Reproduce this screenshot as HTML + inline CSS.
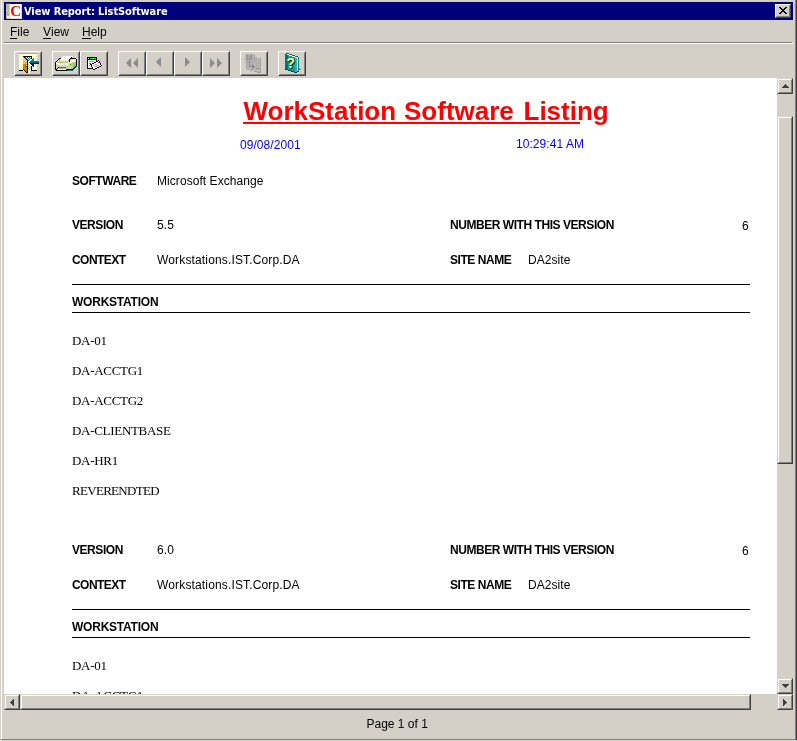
<!DOCTYPE html>
<html>
<head>
<meta charset="utf-8">
<title>View Report: ListSoftware</title>
<style>
html,body{margin:0;padding:0;}
body{width:797px;height:741px;overflow:hidden;background:#d4d0c8;position:relative;font-family:"Liberation Sans",sans-serif;font-size:12px;color:#000;}
#w{position:absolute;left:0;top:0;width:797px;height:741px;background:#d4d0c8;will-change:transform;overflow:hidden;}
.a{position:absolute;}
.t{position:absolute;white-space:nowrap;line-height:16px;height:16px;}
/* window frame */
#fl{left:1px;top:0;width:1px;height:739px;background:#fff;}
#fr1{left:795px;top:0;width:1px;height:740px;background:#808080;}
#fr2{left:796px;top:0;width:1px;height:740px;background:#404040;}
#fb1{left:1px;top:739px;width:794px;height:1px;background:#808080;}
#fb2{left:0;top:740px;width:797px;height:1px;background:#d4d0c8;}
/* title bar */
#tb{left:4px;top:2px;width:789px;height:18px;background:#00007b;}
#ttl{left:24px;top:4px;color:#fff;font-family:'DejaVu Sans Condensed','DejaVu Sans',sans-serif;font-weight:bold;font-size:11px;line-height:16px;letter-spacing:-0.1px;}
#cls{left:775px;top:4px;width:16px;height:14px;background:#d4d0c8;box-sizing:border-box;border:1px solid;border-color:#fff #404040 #404040 #fff;}
#cls i{position:absolute;left:0;top:0;right:0;bottom:0;border:1px solid;border-color:#d4d0c8 #808080 #808080 #d4d0c8;}
/* menu */
.m{top:24px;font-size:12px;}
.m u{text-decoration:none;border-bottom:1px solid #000;padding-bottom:0px;display:inline-block;line-height:12px;}
#ms1{left:4px;top:42px;width:788px;height:1px;background:#808080;}
#ms2{left:4px;top:43px;width:789px;height:1px;background:#fff;}
/* toolbar buttons */
.b{position:absolute;top:51px;width:28px;height:25px;box-sizing:border-box;background:#d4d0c8;border:1px solid;border-color:#fff #404040 #404040 #fff;}
.b:after{content:"";position:absolute;left:0;top:0;right:0;bottom:0;border:1px solid;border-color:#d4d0c8 #808080 #808080 #d4d0c8;}
.b svg{position:absolute;left:-1px;top:-1px;width:28px;height:25px;}
/* page */
#pg{left:4px;top:78px;width:773px;height:616px;background:#fff;overflow:hidden;}
/* scrollbars */
.sb{position:absolute;box-sizing:border-box;background:#d4d0c8;border:1px solid;border-color:#d4d0c8 #404040 #404040 #d4d0c8;}
.sb:after{content:"";position:absolute;left:0;top:0;right:0;bottom:0;border:1px solid;border-color:#fff #808080 #808080 #fff;}
.sb svg{position:absolute;left:-1px;top:-1px;width:16px;height:16px;}
/* report text (coords relative to #pg : page x = X-4, y = Y-78) */
.lb{font-weight:bold;font-size:12px;letter-spacing:-0.45px;}
.v{font-size:12px;letter-spacing:0.06px;}
.ws{font-family:"Liberation Serif",serif;font-size:13px;letter-spacing:-0.3px;}
.hl{position:absolute;left:68px;width:678px;height:1px;background:#000;}
.h1{top:18px;font-size:26px;line-height:30px;height:30px;font-weight:bold;color:#f00;}
#h1u{left:239px;top:44px;width:337px;height:2px;background:#f00;}
.bl{color:#00f;}
</style>
</head>
<body>
<div id="w">
<div class="a" id="fl"></div><div class="a" id="fr1"></div><div class="a" id="fr2"></div><div class="a" id="fb1"></div><div class="a" id="fb2"></div>

<div class="a" id="tb"></div>
<svg class="a" style="left:6px;top:3px" width="16" height="16" viewBox="0 0 16 16" shape-rendering="crispEdges">
<rect x="0" y="0" width="16" height="16" fill="#fbfbf8"/>
<rect x="0" y="1" width="3" height="15" fill="#bdb68a"/><rect x="3" y="1" width="1" height="15" fill="#d9d4b8"/><rect x="15" y="1" width="1" height="15" fill="#d8d8d4"/><rect x="4" y="15" width="12" height="1" fill="#e4e4dc"/>
<rect x="0" y="0" width="4" height="1" fill="#f00"/>
<rect x="4" y="0" width="12" height="1" fill="#000"/>
<rect x="1" y="13" width="2" height="2" fill="#fff"/>
<rect x="0" y="7" width="1" height="1" fill="#fff"/>
<text x="4.2" y="13.2" font-family="Liberation Serif, serif" font-weight="bold" font-size="15" fill="#f00" shape-rendering="auto">C</text>
</svg>
<div class="t" id="ttl">View Report: ListSoftware</div>
<div class="a" id="cls"><i></i>
<svg class="a" style="left:-1px;top:-1px" width="16" height="14" viewBox="0 0 16 14" shape-rendering="crispEdges" fill="#000"><rect x="4" y="3" width="2" height="1"/><rect x="10" y="3" width="2" height="1"/><rect x="5" y="4" width="2" height="1"/><rect x="9" y="4" width="2" height="1"/><rect x="6" y="5" width="4" height="1"/><rect x="7" y="6" width="2" height="1"/><rect x="6" y="7" width="4" height="1"/><rect x="5" y="8" width="2" height="1"/><rect x="9" y="8" width="2" height="1"/><rect x="4" y="9" width="2" height="1"/><rect x="10" y="9" width="2" height="1"/></svg>
</div>

<div class="t m" style="left:10px"><u>F</u>ile</div>
<div class="t m" style="left:43px"><u>V</u>iew</div>
<div class="t m" style="left:82px"><u>H</u>elp</div>
<div class="a" id="ms1"></div><div class="a" id="ms2"></div>

<!-- toolbar -->
<div class="b" style="left:14px" id="b1"><svg viewBox="0 0 28 25" shape-rendering="crispEdges"><rect x="5" y="2" width="18" height="1" fill="#b5b573"/><rect x="5" y="3" width="18" height="1" fill="#ffffce"/><rect x="5" y="4" width="18" height="1" fill="#ffffce"/><rect x="5" y="5" width="4" height="1" fill="#ffffce"/><rect x="9" y="5" width="9" height="1" fill="#000"/><rect x="18" y="5" width="5" height="1" fill="#ffffce"/><rect x="5" y="6" width="4" height="1" fill="#ffffce"/><rect x="9" y="6" width="1" height="1" fill="#f7c694"/><rect x="10" y="6" width="1" height="1" fill="#000"/><rect x="11" y="6" width="1" height="1" fill="#008284"/><rect x="12" y="6" width="1" height="1" fill="#fff"/><rect x="13" y="6" width="1" height="1" fill="#008284"/><rect x="14" y="6" width="1" height="1" fill="#fff"/><rect x="15" y="6" width="1" height="1" fill="#008284"/><rect x="16" y="6" width="1" height="1" fill="#fff"/><rect x="17" y="6" width="1" height="1" fill="#000"/><rect x="18" y="6" width="1" height="1" fill="#ffffce"/><rect x="19" y="6" width="2" height="1" fill="#fff"/><rect x="21" y="6" width="2" height="1" fill="#ffffce"/><rect x="5" y="7" width="4" height="1" fill="#ffffce"/><rect x="9" y="7" width="2" height="1" fill="#f7c694"/><rect x="11" y="7" width="1" height="1" fill="#000"/><rect x="12" y="7" width="1" height="1" fill="#008284"/><rect x="13" y="7" width="1" height="1" fill="#fff"/><rect x="14" y="7" width="1" height="1" fill="#008284"/><rect x="15" y="7" width="1" height="1" fill="#fff"/><rect x="16" y="7" width="1" height="1" fill="#008284"/><rect x="17" y="7" width="1" height="1" fill="#000"/><rect x="18" y="7" width="1" height="1" fill="#fff"/><rect x="19" y="7" width="1" height="1" fill="#008284"/><rect x="20" y="7" width="1" height="1" fill="#fff"/><rect x="21" y="7" width="2" height="1" fill="#ffffce"/><rect x="5" y="8" width="4" height="1" fill="#ffffce"/><rect x="9" y="8" width="3" height="1" fill="#f7c694"/><rect x="12" y="8" width="1" height="1" fill="#000"/><rect x="13" y="8" width="1" height="1" fill="#008284"/><rect x="14" y="8" width="1" height="1" fill="#fff"/><rect x="15" y="8" width="1" height="1" fill="#008284"/><rect x="16" y="8" width="2" height="1" fill="#fff"/><rect x="18" y="8" width="2" height="1" fill="#008284"/><rect x="20" y="8" width="1" height="1" fill="#fff"/><rect x="21" y="8" width="2" height="1" fill="#ffffce"/><rect x="5" y="9" width="4" height="1" fill="#ffffce"/><rect x="9" y="9" width="4" height="1" fill="#f7c694"/><rect x="13" y="9" width="1" height="1" fill="#000"/><rect x="14" y="9" width="1" height="1" fill="#008284"/><rect x="15" y="9" width="2" height="1" fill="#fff"/><rect x="17" y="9" width="3" height="1" fill="#008284"/><rect x="20" y="9" width="3" height="1" fill="#fff"/><rect x="5" y="10" width="4" height="1" fill="#ffffce"/><rect x="9" y="10" width="4" height="1" fill="#efb27b"/><rect x="13" y="10" width="1" height="1" fill="#000"/><rect x="14" y="10" width="2" height="1" fill="#fff"/><rect x="16" y="10" width="9" height="1" fill="#008284"/><rect x="5" y="11" width="4" height="1" fill="#ffffce"/><rect x="9" y="11" width="4" height="1" fill="#efb27b"/><rect x="13" y="11" width="1" height="1" fill="#000"/><rect x="14" y="11" width="1" height="1" fill="#fff"/><rect x="15" y="11" width="10" height="1" fill="#00636b"/><rect x="5" y="12" width="4" height="1" fill="#ffffce"/><rect x="9" y="12" width="4" height="1" fill="#efb27b"/><rect x="13" y="12" width="1" height="1" fill="#000"/><rect x="14" y="12" width="2" height="1" fill="#fff"/><rect x="16" y="12" width="9" height="1" fill="#000084"/><rect x="5" y="13" width="4" height="1" fill="#ffffce"/><rect x="9" y="13" width="4" height="1" fill="#c6840c"/><rect x="13" y="13" width="1" height="1" fill="#000"/><rect x="14" y="13" width="1" height="1" fill="#c6c6c6"/><rect x="15" y="13" width="2" height="1" fill="#fff"/><rect x="17" y="13" width="3" height="1" fill="#000084"/><rect x="20" y="13" width="3" height="1" fill="#fff"/><rect x="5" y="14" width="4" height="1" fill="#ffffce"/><rect x="9" y="14" width="3" height="1" fill="#c6840c"/><rect x="12" y="14" width="1" height="1" fill="#fff"/><rect x="13" y="14" width="1" height="1" fill="#000"/><rect x="14" y="14" width="1" height="1" fill="#fff"/><rect x="15" y="14" width="1" height="1" fill="#c6c6c6"/><rect x="16" y="14" width="2" height="1" fill="#fff"/><rect x="18" y="14" width="2" height="1" fill="#000084"/><rect x="20" y="14" width="1" height="1" fill="#fff"/><rect x="21" y="14" width="2" height="1" fill="#ffffce"/><rect x="5" y="15" width="4" height="1" fill="#ffffce"/><rect x="9" y="15" width="3" height="1" fill="#c6840c"/><rect x="12" y="15" width="2" height="1" fill="#000"/><rect x="14" y="15" width="1" height="1" fill="#c6c6c6"/><rect x="15" y="15" width="1" height="1" fill="#fff"/><rect x="16" y="15" width="1" height="1" fill="#c6c6c6"/><rect x="17" y="15" width="1" height="1" fill="#000"/><rect x="18" y="15" width="1" height="1" fill="#fff"/><rect x="19" y="15" width="1" height="1" fill="#000084"/><rect x="20" y="15" width="1" height="1" fill="#fff"/><rect x="21" y="15" width="2" height="1" fill="#ffffce"/><rect x="5" y="16" width="4" height="1" fill="#ffffce"/><rect x="9" y="16" width="4" height="1" fill="#c6840c"/><rect x="13" y="16" width="1" height="1" fill="#000"/><rect x="14" y="16" width="1" height="1" fill="#fff"/><rect x="15" y="16" width="1" height="1" fill="#c6c6c6"/><rect x="16" y="16" width="1" height="1" fill="#fff"/><rect x="17" y="16" width="1" height="1" fill="#000"/><rect x="18" y="16" width="1" height="1" fill="#ffffce"/><rect x="19" y="16" width="2" height="1" fill="#fff"/><rect x="21" y="16" width="2" height="1" fill="#ffffce"/><rect x="5" y="17" width="4" height="1" fill="#ffffce"/><rect x="9" y="17" width="4" height="1" fill="#c6840c"/><rect x="13" y="17" width="1" height="1" fill="#000"/><rect x="14" y="17" width="1" height="1" fill="#c6c6c6"/><rect x="15" y="17" width="1" height="1" fill="#fff"/><rect x="16" y="17" width="1" height="1" fill="#c6c6c6"/><rect x="17" y="17" width="1" height="1" fill="#000"/><rect x="18" y="17" width="5" height="1" fill="#ffffce"/><rect x="5" y="18" width="4" height="1" fill="#ffffce"/><rect x="9" y="18" width="1" height="1" fill="#000"/><rect x="10" y="18" width="3" height="1" fill="#c6840c"/><rect x="13" y="18" width="1" height="1" fill="#000"/><rect x="14" y="18" width="1" height="1" fill="#fff"/><rect x="15" y="18" width="1" height="1" fill="#c6c6c6"/><rect x="16" y="18" width="1" height="1" fill="#fff"/><rect x="17" y="18" width="1" height="1" fill="#000"/><rect x="18" y="18" width="5" height="1" fill="#ffffce"/><rect x="5" y="19" width="4" height="1" fill="#000"/><rect x="9" y="19" width="1" height="1" fill="#ffffce"/><rect x="10" y="19" width="1" height="1" fill="#000"/><rect x="11" y="19" width="2" height="1" fill="#c6840c"/><rect x="13" y="19" width="1" height="1" fill="#000"/><rect x="14" y="19" width="2" height="1" fill="#fff"/><rect x="16" y="19" width="1" height="1" fill="#ffffce"/><rect x="17" y="19" width="6" height="1" fill="#000"/><rect x="11" y="20" width="1" height="1" fill="#000"/><rect x="12" y="20" width="1" height="1" fill="#c6840c"/><rect x="13" y="20" width="1" height="1" fill="#000"/><rect x="14" y="20" width="2" height="1" fill="#fff"/><rect x="12" y="21" width="2" height="1" fill="#000"/><rect x="14" y="21" width="2" height="1" fill="#fff"/></svg></div>
<div class="b" style="left:52px" id="b2"><svg viewBox="0 0 28 25" shape-rendering="crispEdges"><rect x="11" y="5" width="10" height="1" fill="#fff"/><rect x="10" y="6" width="9" height="1" fill="#fff"/><rect x="19" y="6" width="1" height="1" fill="#000"/><rect x="7" y="7" width="2" height="1" fill="#000"/><rect x="9" y="7" width="9" height="1" fill="#fff"/><rect x="18" y="7" width="6" height="1" fill="#000"/><rect x="6" y="8" width="1" height="1" fill="#000"/><rect x="7" y="8" width="1" height="1" fill="#9c9c9c"/><rect x="8" y="8" width="9" height="1" fill="#fff"/><rect x="17" y="8" width="1" height="1" fill="#000"/><rect x="18" y="8" width="1" height="1" fill="#9c9c9c"/><rect x="19" y="8" width="5" height="1" fill="#efefc6"/><rect x="24" y="8" width="1" height="1" fill="#000"/><rect x="5" y="9" width="1" height="1" fill="#000"/><rect x="6" y="9" width="1" height="1" fill="#efefc6"/><rect x="7" y="9" width="1" height="1" fill="#9c9c9c"/><rect x="8" y="9" width="8" height="1" fill="#efefc6"/><rect x="17" y="9" width="1" height="1" fill="#000"/><rect x="18" y="9" width="3" height="1" fill="#efefc6"/><rect x="21" y="9" width="3" height="1" fill="#fff"/><rect x="24" y="9" width="1" height="1" fill="#000"/><rect x="4" y="10" width="1" height="1" fill="#000"/><rect x="5" y="10" width="12" height="1" fill="#d6d6a5"/><rect x="17" y="10" width="1" height="1" fill="#000"/><rect x="18" y="10" width="2" height="1" fill="#efefc6"/><rect x="20" y="10" width="3" height="1" fill="#fff"/><rect x="23" y="10" width="1" height="1" fill="#c6c68c"/><rect x="24" y="10" width="1" height="1" fill="#000"/><rect x="3" y="11" width="1" height="1" fill="#000"/><rect x="4" y="11" width="1" height="1" fill="#fff"/><rect x="5" y="11" width="12" height="1" fill="#c6c68c"/><rect x="17" y="11" width="3" height="1" fill="#fff"/><rect x="20" y="11" width="4" height="1" fill="#c6c68c"/><rect x="24" y="11" width="1" height="1" fill="#000"/><rect x="3" y="12" width="1" height="1" fill="#000"/><rect x="4" y="12" width="2" height="1" fill="#fff"/><rect x="6" y="12" width="11" height="1" fill="#efefc6"/><rect x="17" y="12" width="2" height="1" fill="#d6d6a5"/><rect x="19" y="12" width="2" height="1" fill="#c6c68c"/><rect x="21" y="12" width="3" height="1" fill="#b5b57b"/><rect x="24" y="12" width="1" height="1" fill="#000"/><rect x="3" y="13" width="1" height="1" fill="#000"/><rect x="4" y="13" width="2" height="1" fill="#d6d6a5"/><rect x="6" y="13" width="10" height="1" fill="#fff"/><rect x="16" y="13" width="2" height="1" fill="#d6d6a5"/><rect x="18" y="13" width="1" height="1" fill="#00b500"/><rect x="19" y="13" width="2" height="1" fill="#c6c68c"/><rect x="21" y="13" width="3" height="1" fill="#b5b57b"/><rect x="24" y="13" width="1" height="1" fill="#000"/><rect x="3" y="14" width="1" height="1" fill="#000"/><rect x="4" y="14" width="15" height="1" fill="#d6d6a5"/><rect x="19" y="14" width="2" height="1" fill="#c6c68c"/><rect x="21" y="14" width="3" height="1" fill="#b5b57b"/><rect x="24" y="14" width="1" height="1" fill="#000"/><rect x="3" y="15" width="1" height="1" fill="#000"/><rect x="4" y="15" width="15" height="1" fill="#d6d6a5"/><rect x="19" y="15" width="2" height="1" fill="#c6c68c"/><rect x="21" y="15" width="2" height="1" fill="#b5b57b"/><rect x="23" y="15" width="1" height="1" fill="#000"/><rect x="24" y="15" width="1" height="1" fill="#008284"/><rect x="3" y="16" width="1" height="1" fill="#000"/><rect x="4" y="16" width="2" height="1" fill="#d6d6a5"/><rect x="6" y="16" width="1" height="1" fill="#000"/><rect x="7" y="16" width="7" height="1" fill="#636363"/><rect x="14" y="16" width="5" height="1" fill="#d6d6a5"/><rect x="19" y="16" width="2" height="1" fill="#c6c68c"/><rect x="21" y="16" width="1" height="1" fill="#b5b57b"/><rect x="22" y="16" width="1" height="1" fill="#000"/><rect x="23" y="16" width="1" height="1" fill="#008284"/><rect x="3" y="17" width="1" height="1" fill="#000"/><rect x="4" y="17" width="1" height="1" fill="#d6d6a5"/><rect x="5" y="17" width="1" height="1" fill="#000"/><rect x="6" y="17" width="9" height="1" fill="#bdbdad"/><rect x="15" y="17" width="4" height="1" fill="#d6d6a5"/><rect x="19" y="17" width="2" height="1" fill="#c6c68c"/><rect x="21" y="17" width="1" height="1" fill="#000"/><rect x="22" y="17" width="1" height="1" fill="#008284"/><rect x="3" y="18" width="2" height="1" fill="#000"/><rect x="5" y="18" width="1" height="1" fill="#d6d6a5"/><rect x="6" y="18" width="8" height="1" fill="#fff"/><rect x="14" y="18" width="1" height="1" fill="#004a4a"/><rect x="15" y="18" width="6" height="1" fill="#000"/><rect x="21" y="18" width="1" height="1" fill="#008284"/><rect x="4" y="19" width="11" height="1" fill="#000"/><rect x="15" y="19" width="6" height="1" fill="#008284"/></svg></div>
<div class="b" style="left:80px" id="b3"><svg viewBox="0 0 28 25" shape-rendering="crispEdges"><rect x="7" y="6" width="10" height="1" fill="#000"/><rect x="7" y="7" width="1" height="1" fill="#000"/><rect x="8" y="7" width="1" height="1" fill="#fff"/><rect x="9" y="7" width="1" height="1" fill="#000"/><rect x="10" y="7" width="6" height="1" fill="#00ff00"/><rect x="16" y="7" width="1" height="1" fill="#000"/><rect x="7" y="8" width="10" height="1" fill="#000"/><rect x="7" y="9" width="1" height="1" fill="#000"/><rect x="8" y="9" width="8" height="1" fill="#fff"/><rect x="16" y="9" width="1" height="1" fill="#000"/><rect x="18" y="9" width="1" height="1" fill="#000"/><rect x="7" y="10" width="1" height="1" fill="#000"/><rect x="8" y="10" width="1" height="1" fill="#fff"/><rect x="9" y="10" width="5" height="1" fill="#9c9c9c"/><rect x="14" y="10" width="2" height="1" fill="#fff"/><rect x="16" y="10" width="2" height="1" fill="#000"/><rect x="18" y="10" width="1" height="1" fill="#fff"/><rect x="19" y="10" width="1" height="1" fill="#000"/><rect x="7" y="11" width="1" height="1" fill="#000"/><rect x="8" y="11" width="6" height="1" fill="#fff"/><rect x="14" y="11" width="2" height="1" fill="#000"/><rect x="16" y="11" width="2" height="1" fill="#fff"/><rect x="18" y="11" width="1" height="1" fill="#ff00ff"/><rect x="19" y="11" width="1" height="1" fill="#000"/><rect x="7" y="12" width="1" height="1" fill="#000"/><rect x="8" y="12" width="1" height="1" fill="#fff"/><rect x="9" y="12" width="1" height="1" fill="#9c9c9c"/><rect x="10" y="12" width="1" height="1" fill="#404040"/><rect x="11" y="12" width="1" height="1" fill="#fff"/><rect x="12" y="12" width="2" height="1" fill="#000"/><rect x="14" y="12" width="6" height="1" fill="#fff"/><rect x="20" y="12" width="1" height="1" fill="#000"/><rect x="7" y="13" width="1" height="1" fill="#000"/><rect x="8" y="13" width="2" height="1" fill="#fff"/><rect x="10" y="13" width="2" height="1" fill="#000"/><rect x="12" y="13" width="3" height="1" fill="#fff"/><rect x="15" y="13" width="2" height="1" fill="#9c9c9c"/><rect x="17" y="13" width="3" height="1" fill="#fff"/><rect x="20" y="13" width="1" height="1" fill="#000"/><rect x="7" y="14" width="1" height="1" fill="#000"/><rect x="8" y="14" width="1" height="1" fill="#fff"/><rect x="9" y="14" width="1" height="1" fill="#9c9c9c"/><rect x="10" y="14" width="1" height="1" fill="#fff"/><rect x="11" y="14" width="1" height="1" fill="#000"/><rect x="12" y="14" width="1" height="1" fill="#fff"/><rect x="13" y="14" width="2" height="1" fill="#9c9c9c"/><rect x="15" y="14" width="2" height="1" fill="#fff"/><rect x="17" y="14" width="2" height="1" fill="#9c9c9c"/><rect x="19" y="14" width="2" height="1" fill="#fff"/><rect x="21" y="14" width="1" height="1" fill="#000"/><rect x="7" y="15" width="1" height="1" fill="#000"/><rect x="8" y="15" width="3" height="1" fill="#fff"/><rect x="11" y="15" width="1" height="1" fill="#000"/><rect x="12" y="15" width="3" height="1" fill="#fff"/><rect x="15" y="15" width="2" height="1" fill="#9c9c9c"/><rect x="17" y="15" width="2" height="1" fill="#fff"/><rect x="19" y="15" width="2" height="1" fill="#000"/><rect x="7" y="16" width="1" height="1" fill="#000"/><rect x="8" y="16" width="4" height="1" fill="#fff"/><rect x="12" y="16" width="1" height="1" fill="#000"/><rect x="13" y="16" width="4" height="1" fill="#fff"/><rect x="17" y="16" width="2" height="1" fill="#000"/><rect x="7" y="17" width="6" height="1" fill="#000"/><rect x="13" y="17" width="2" height="1" fill="#fff"/><rect x="15" y="17" width="2" height="1" fill="#000"/><rect x="13" y="18" width="2" height="1" fill="#000"/></svg></div>
<div class="b" style="left:118px" id="b4"><svg viewBox="0 0 28 25"><path d="M8 12l5-5v10zM15 12l5-5v10z" fill="#8c8c8c"/></svg></div>
<div class="b" style="left:146px" id="b5"><svg viewBox="0 0 28 25"><path d="M10 11l5-5v10z" fill="#8c8c8c"/></svg></div>
<div class="b" style="left:174px" id="b6"><svg viewBox="0 0 28 25"><path d="M16 11l-5-5v10z" fill="#8c8c8c"/></svg></div>
<div class="b" style="left:202px" id="b7"><svg viewBox="0 0 28 25"><path d="M13 12l-5-5v10zM20 12l-5-5v10z" fill="#8c8c8c"/></svg></div>
<div class="b" style="left:240px" id="b8"><svg viewBox="0 0 28 25" shape-rendering="crispEdges"><rect x="5" y="3" width="9" height="1" fill="#b4b4b4"/><rect x="5" y="4" width="9" height="1" fill="#b4b4b4"/><rect x="14" y="4" width="1" height="1" fill="#a2a2a2"/><rect x="5" y="5" width="9" height="1" fill="#b4b4b4"/><rect x="14" y="5" width="1" height="1" fill="#a2a2a2"/><rect x="5" y="6" width="9" height="1" fill="#b4b4b4"/><rect x="14" y="6" width="1" height="1" fill="#a2a2a2"/><rect x="15" y="6" width="2" height="1" fill="#b4b4b4"/><rect x="5" y="7" width="9" height="1" fill="#b4b4b4"/><rect x="14" y="7" width="1" height="1" fill="#a2a2a2"/><rect x="15" y="7" width="5" height="1" fill="#b4b4b4"/><rect x="20" y="7" width="1" height="1" fill="#a2a2a2"/><rect x="5" y="8" width="9" height="1" fill="#b4b4b4"/><rect x="14" y="8" width="1" height="1" fill="#a2a2a2"/><rect x="15" y="8" width="5" height="1" fill="#b4b4b4"/><rect x="20" y="8" width="1" height="1" fill="#a2a2a2"/><rect x="5" y="9" width="9" height="1" fill="#b4b4b4"/><rect x="14" y="9" width="1" height="1" fill="#a2a2a2"/><rect x="15" y="9" width="5" height="1" fill="#b4b4b4"/><rect x="20" y="9" width="1" height="1" fill="#a2a2a2"/><rect x="6" y="10" width="9" height="1" fill="#a2a2a2"/><rect x="15" y="10" width="5" height="1" fill="#b4b4b4"/><rect x="20" y="10" width="1" height="1" fill="#a2a2a2"/><rect x="6" y="11" width="1" height="1" fill="#a2a2a2"/><rect x="7" y="11" width="2" height="1" fill="#b4b4b4"/><rect x="9" y="11" width="1" height="1" fill="#8c8c8c"/><rect x="10" y="11" width="6" height="1" fill="#b4b4b4"/><rect x="16" y="11" width="3" height="1" fill="#aaaaaa"/><rect x="19" y="11" width="1" height="1" fill="#b4b4b4"/><rect x="20" y="11" width="1" height="1" fill="#a2a2a2"/><rect x="6" y="12" width="1" height="1" fill="#a2a2a2"/><rect x="7" y="12" width="2" height="1" fill="#b4b4b4"/><rect x="9" y="12" width="1" height="1" fill="#8c8c8c"/><rect x="10" y="12" width="10" height="1" fill="#b4b4b4"/><rect x="20" y="12" width="1" height="1" fill="#a2a2a2"/><rect x="6" y="13" width="1" height="1" fill="#a2a2a2"/><rect x="7" y="13" width="2" height="1" fill="#b4b4b4"/><rect x="9" y="13" width="1" height="1" fill="#8c8c8c"/><rect x="10" y="13" width="2" height="1" fill="#b4b4b4"/><rect x="12" y="13" width="1" height="1" fill="#8c8c8c"/><rect x="13" y="13" width="7" height="1" fill="#b4b4b4"/><rect x="20" y="13" width="1" height="1" fill="#a2a2a2"/><rect x="6" y="14" width="1" height="1" fill="#a2a2a2"/><rect x="7" y="14" width="2" height="1" fill="#b4b4b4"/><rect x="9" y="14" width="1" height="1" fill="#8c8c8c"/><rect x="10" y="14" width="2" height="1" fill="#b4b4b4"/><rect x="12" y="14" width="2" height="1" fill="#8c8c8c"/><rect x="14" y="14" width="2" height="1" fill="#b4b4b4"/><rect x="16" y="14" width="3" height="1" fill="#aaaaaa"/><rect x="19" y="14" width="1" height="1" fill="#b4b4b4"/><rect x="20" y="14" width="1" height="1" fill="#a2a2a2"/><rect x="6" y="15" width="1" height="1" fill="#a2a2a2"/><rect x="7" y="15" width="2" height="1" fill="#b4b4b4"/><rect x="9" y="15" width="6" height="1" fill="#8c8c8c"/><rect x="15" y="15" width="5" height="1" fill="#b4b4b4"/><rect x="20" y="15" width="1" height="1" fill="#a2a2a2"/><rect x="6" y="16" width="1" height="1" fill="#a2a2a2"/><rect x="7" y="16" width="5" height="1" fill="#b4b4b4"/><rect x="12" y="16" width="2" height="1" fill="#8c8c8c"/><rect x="14" y="16" width="6" height="1" fill="#b4b4b4"/><rect x="20" y="16" width="1" height="1" fill="#a2a2a2"/><rect x="6" y="17" width="1" height="1" fill="#a2a2a2"/><rect x="7" y="17" width="5" height="1" fill="#b4b4b4"/><rect x="12" y="17" width="1" height="1" fill="#8c8c8c"/><rect x="13" y="17" width="3" height="1" fill="#b4b4b4"/><rect x="16" y="17" width="3" height="1" fill="#8c8c8c"/><rect x="19" y="17" width="1" height="1" fill="#b4b4b4"/><rect x="20" y="17" width="1" height="1" fill="#a2a2a2"/><rect x="7" y="18" width="2" height="1" fill="#a2a2a2"/><rect x="10" y="18" width="10" height="1" fill="#b4b4b4"/><rect x="20" y="18" width="1" height="1" fill="#a2a2a2"/><rect x="10" y="19" width="3" height="1" fill="#a2a2a2"/><rect x="14" y="19" width="6" height="1" fill="#b4b4b4"/><rect x="20" y="19" width="1" height="1" fill="#a2a2a2"/><rect x="14" y="20" width="3" height="1" fill="#a2a2a2"/><rect x="17" y="20" width="3" height="1" fill="#b4b4b4"/><rect x="20" y="20" width="1" height="1" fill="#a2a2a2"/><rect x="17" y="21" width="4" height="1" fill="#a2a2a2"/><text x="6.1" y="9" font-family="Liberation Sans, sans-serif" font-size="7" font-weight="bold" fill="#868686" textLength="6.4" lengthAdjust="spacingAndGlyphs" style="shape-rendering:auto">16</text></svg></div>
<div class="b" style="left:278px" id="b9"><svg viewBox="0 0 28 25" shape-rendering="crispEdges"><rect x="8" y="2" width="3" height="1" fill="#007373"/><rect x="7" y="3" width="2" height="1" fill="#007373"/><rect x="9" y="3" width="2" height="1" fill="#fff"/><rect x="11" y="3" width="3" height="1" fill="#007373"/><rect x="7" y="4" width="3" height="1" fill="#007373"/><rect x="10" y="4" width="1" height="1" fill="#109c9c"/><rect x="11" y="4" width="3" height="1" fill="#fff"/><rect x="14" y="4" width="3" height="1" fill="#007373"/><rect x="7" y="5" width="3" height="1" fill="#007373"/><rect x="10" y="5" width="4" height="1" fill="#109c9c"/><rect x="14" y="5" width="3" height="1" fill="#fff"/><rect x="17" y="5" width="3" height="1" fill="#007373"/><rect x="7" y="6" width="3" height="1" fill="#007373"/><rect x="10" y="6" width="7" height="1" fill="#109c9c"/><rect x="17" y="6" width="3" height="1" fill="#fff"/><rect x="20" y="6" width="1" height="1" fill="#008284"/><rect x="7" y="7" width="3" height="1" fill="#007373"/><rect x="10" y="7" width="7" height="1" fill="#109c9c"/><rect x="17" y="7" width="2" height="1" fill="#39adad"/><rect x="19" y="7" width="1" height="1" fill="#fff"/><rect x="20" y="7" width="1" height="1" fill="#008284"/><rect x="7" y="8" width="3" height="1" fill="#007373"/><rect x="10" y="8" width="7" height="1" fill="#109c9c"/><rect x="17" y="8" width="2" height="1" fill="#39adad"/><rect x="19" y="8" width="1" height="1" fill="#fff"/><rect x="20" y="8" width="1" height="1" fill="#008284"/><rect x="7" y="9" width="3" height="1" fill="#007373"/><rect x="10" y="9" width="7" height="1" fill="#109c9c"/><rect x="17" y="9" width="2" height="1" fill="#39adad"/><rect x="19" y="9" width="1" height="1" fill="#fff"/><rect x="20" y="9" width="1" height="1" fill="#008284"/><rect x="7" y="10" width="3" height="1" fill="#007373"/><rect x="10" y="10" width="7" height="1" fill="#109c9c"/><rect x="17" y="10" width="2" height="1" fill="#39adad"/><rect x="19" y="10" width="1" height="1" fill="#fff"/><rect x="20" y="10" width="1" height="1" fill="#008284"/><rect x="7" y="11" width="3" height="1" fill="#007373"/><rect x="10" y="11" width="7" height="1" fill="#109c9c"/><rect x="17" y="11" width="2" height="1" fill="#39adad"/><rect x="19" y="11" width="1" height="1" fill="#fff"/><rect x="20" y="11" width="1" height="1" fill="#008284"/><rect x="7" y="12" width="3" height="1" fill="#007373"/><rect x="10" y="12" width="7" height="1" fill="#109c9c"/><rect x="17" y="12" width="2" height="1" fill="#39adad"/><rect x="19" y="12" width="1" height="1" fill="#fff"/><rect x="20" y="12" width="1" height="1" fill="#008284"/><rect x="7" y="13" width="3" height="1" fill="#007373"/><rect x="10" y="13" width="7" height="1" fill="#109c9c"/><rect x="17" y="13" width="2" height="1" fill="#39adad"/><rect x="19" y="13" width="1" height="1" fill="#fff"/><rect x="20" y="13" width="1" height="1" fill="#008284"/><rect x="7" y="14" width="3" height="1" fill="#007373"/><rect x="10" y="14" width="7" height="1" fill="#109c9c"/><rect x="17" y="14" width="2" height="1" fill="#39adad"/><rect x="19" y="14" width="1" height="1" fill="#fff"/><rect x="20" y="14" width="1" height="1" fill="#008284"/><rect x="7" y="15" width="3" height="1" fill="#007373"/><rect x="10" y="15" width="7" height="1" fill="#109c9c"/><rect x="17" y="15" width="2" height="1" fill="#39adad"/><rect x="19" y="15" width="1" height="1" fill="#fff"/><rect x="20" y="15" width="1" height="1" fill="#008284"/><rect x="7" y="16" width="3" height="1" fill="#007373"/><rect x="10" y="16" width="7" height="1" fill="#109c9c"/><rect x="17" y="16" width="2" height="1" fill="#39adad"/><rect x="19" y="16" width="1" height="1" fill="#fff"/><rect x="20" y="16" width="1" height="1" fill="#008284"/><rect x="7" y="17" width="3" height="1" fill="#007373"/><rect x="10" y="17" width="7" height="1" fill="#109c9c"/><rect x="17" y="17" width="2" height="1" fill="#39adad"/><rect x="19" y="17" width="1" height="1" fill="#fff"/><rect x="20" y="17" width="1" height="1" fill="#008284"/><rect x="21" y="17" width="1" height="1" fill="#848484"/><rect x="7" y="18" width="3" height="1" fill="#004242"/><rect x="10" y="18" width="7" height="1" fill="#109c9c"/><rect x="17" y="18" width="2" height="1" fill="#39adad"/><rect x="19" y="18" width="1" height="1" fill="#fff"/><rect x="20" y="18" width="1" height="1" fill="#008284"/><rect x="21" y="18" width="2" height="1" fill="#848484"/><rect x="10" y="19" width="3" height="1" fill="#004242"/><rect x="13" y="19" width="4" height="1" fill="#109c9c"/><rect x="17" y="19" width="2" height="1" fill="#39adad"/><rect x="19" y="19" width="1" height="1" fill="#fff"/><rect x="20" y="19" width="1" height="1" fill="#008284"/><rect x="13" y="20" width="3" height="1" fill="#004242"/><rect x="16" y="20" width="1" height="1" fill="#109c9c"/><rect x="17" y="20" width="2" height="1" fill="#39adad"/><rect x="19" y="20" width="2" height="1" fill="#004242"/><rect x="16" y="21" width="3" height="1" fill="#004242"/><g style="shape-rendering:auto" font-family="Liberation Sans, sans-serif" font-size="14" font-weight="bold"><text x="9.6" y="17.8" fill="#003131">?</text><text x="8.6" y="17" fill="#ffff7b">?</text></g></svg></div>

<!-- page -->
<div class="a" id="pg">
<div class="t h1" style="left:239.5px">WorkStation</div><div class="t h1" style="left:400px">Software</div><div class="t h1" style="left:519.5px">Listing</div>
<div class="a" id="h1u"></div>
<div class="t v bl" style="left:236px;top:59px">09/08/2001</div>
<div class="t v bl" style="left:512px;top:58px">10:29:41 AM</div>

<div class="t lb" style="left:68px;top:95px">SOFTWARE</div>
<div class="t v" style="left:153px;top:95px">Microsoft Exchange</div>

<div class="t lb" style="left:68px;top:139px">VERSION</div>
<div class="t v" style="left:153px;top:139px">5.5</div>
<div class="t lb" style="left:446px;top:139px">NUMBER WITH THIS VERSION</div>
<div class="t v" style="left:738px;top:140px">6</div>
<div class="t lb" style="left:68px;top:174px;letter-spacing:-0.55px">CONTEXT</div>
<div class="t v" style="left:153px;top:174px;letter-spacing:0.15px">Workstations.IST.Corp.DA</div>
<div class="t lb" style="left:446px;top:174px">SITE NAME</div>
<div class="t v" style="left:524px;top:174px">DA2site</div>
<div class="hl" style="top:206px"></div>
<div class="t lb" style="left:68px;top:216px;letter-spacing:-0.23px">WORKSTATION</div>
<div class="hl" style="top:234px"></div>
<div class="t ws" style="left:68px;top:255px">DA-01</div>
<div class="t ws" style="left:68px;top:285px">DA-ACCTG1</div>
<div class="t ws" style="left:68px;top:315px">DA-ACCTG2</div>
<div class="t ws" style="left:68px;top:345px">DA-CLIENTBASE</div>
<div class="t ws" style="left:68px;top:375px">DA-HR1</div>
<div class="t ws" style="left:68px;top:405px;letter-spacing:-0.7px">REVERENDTED</div>

<div class="t lb" style="left:68px;top:464px">VERSION</div>
<div class="t v" style="left:153px;top:464px">6.0</div>
<div class="t lb" style="left:446px;top:464px">NUMBER WITH THIS VERSION</div>
<div class="t v" style="left:738px;top:465px">6</div>
<div class="t lb" style="left:68px;top:499px;letter-spacing:-0.55px">CONTEXT</div>
<div class="t v" style="left:153px;top:499px;letter-spacing:0.15px">Workstations.IST.Corp.DA</div>
<div class="t lb" style="left:446px;top:499px">SITE NAME</div>
<div class="t v" style="left:524px;top:499px">DA2site</div>
<div class="hl" style="top:531px"></div>
<div class="t lb" style="left:68px;top:541px;letter-spacing:-0.23px">WORKSTATION</div>
<div class="hl" style="top:559px"></div>
<div class="t ws" style="left:68px;top:580px">DA-01</div>
<div class="t ws" style="left:68px;top:610px">DA-ACCTG1</div>
</div>

<!-- vertical scrollbar -->
<div class="sb" style="left:777px;top:78px;width:16px;height:16px"><svg viewBox="0 0 16 16" shape-rendering="crispEdges"><path d="M8 6h1v1h1v1h1v1h1v1h-7v-1h1v-1h1v-1h1z" fill="#404040"/></svg></div>
<div class="sb" style="left:777px;top:116px;width:16px;height:348px"></div>
<div class="sb" style="left:777px;top:678px;width:16px;height:16px"><svg viewBox="0 0 16 16" shape-rendering="crispEdges"><path d="M5 6h7v1h-1v1h-1v1h-1v1h-1v-1h-1v-1h-1v-1h-1z" fill="#404040"/></svg></div>
<!-- horizontal scrollbar -->
<div class="sb" style="left:4px;top:694px;width:16px;height:16px"><svg viewBox="0 0 16 16" shape-rendering="crispEdges"><path d="M6 8h1v-1h1v-1h1v-1h1v7h-1v-1h-1v-1h-1v-1h-1z" fill="#404040"/></svg></div>
<div class="sb" style="left:20px;top:694px;width:731px;height:16px"></div>
<div class="sb" style="left:777px;top:694px;width:16px;height:16px"><svg viewBox="0 0 16 16" shape-rendering="crispEdges"><path d="M6 5h1v1h1v1h1v1h1v1h-1v1h-1v1h-1v1h-1z" fill="#404040"/></svg></div>

<div class="t" style="left:366.5px;top:716px;font-size:12px">Page 1 of 1</div>
</div>
</body>
</html>
